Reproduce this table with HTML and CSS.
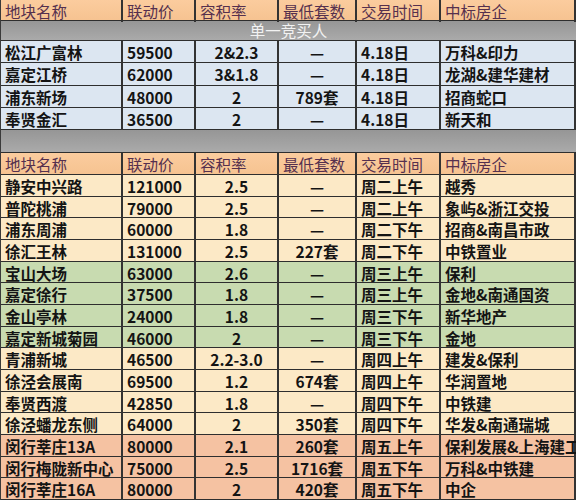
FILE: index.html
```html
<!DOCTYPE html>
<html lang="zh-CN">
<head>
<meta charset="utf-8">
<title>土拍</title>
<link rel="stylesheet" href="styles.css">
</head>
<body>
<div class="sheet">
  <div class="row head h1">
    <div class="c">地块名称</div><div class="c">联动价</div><div class="c">容积率</div><div class="c">最低套数</div><div class="c">交易时间</div><div class="c">中标房企</div>
  </div>
  <div class="band b1">单一竞买人</div>
  <div class="row blue r1">
    <div class="c">松江广富林</div><div class="c">59500</div><div class="c mid">2&amp;2.3</div><div class="c mid">—</div><div class="c">4.18日</div><div class="c">万科&amp;印力</div>
  </div>
  <div class="row blue r1">
    <div class="c">嘉定江桥</div><div class="c">62000</div><div class="c mid">3&amp;1.8</div><div class="c mid">—</div><div class="c">4.18日</div><div class="c">龙湖&amp;建华建材</div>
  </div>
  <div class="row blue r1">
    <div class="c">浦东新场</div><div class="c">48000</div><div class="c mid">2</div><div class="c mid">789套</div><div class="c">4.18日</div><div class="c">招商蛇口</div>
  </div>
  <div class="row blue r1">
    <div class="c">奉贤金汇</div><div class="c">36500</div><div class="c mid">2</div><div class="c mid">—</div><div class="c">4.18日</div><div class="c">新天和</div>
  </div>
  <div class="band b2"></div>
  <div class="row head h2">
    <div class="c">地块名称</div><div class="c">联动价</div><div class="c">容积率</div><div class="c">最低套数</div><div class="c">交易时间</div><div class="c">中标房企</div>
  </div>
  <div class="row cream">
    <div class="c">静安中兴路</div><div class="c">121000</div><div class="c mid">2.5</div><div class="c mid">—</div><div class="c">周二上午</div><div class="c">越秀</div>
  </div>
  <div class="row cream">
    <div class="c">普陀桃浦</div><div class="c">79000</div><div class="c mid">2.5</div><div class="c mid">—</div><div class="c">周二上午</div><div class="c">象屿&amp;浙江交投</div>
  </div>
  <div class="row cream">
    <div class="c">浦东周浦</div><div class="c">60000</div><div class="c mid">1.8</div><div class="c mid">—</div><div class="c">周二下午</div><div class="c">招商&amp;南昌市政</div>
  </div>
  <div class="row cream">
    <div class="c">徐汇王林</div><div class="c">131000</div><div class="c mid">2.5</div><div class="c mid">227套</div><div class="c">周二下午</div><div class="c">中铁置业</div>
  </div>
  <div class="row green">
    <div class="c">宝山大场</div><div class="c">63000</div><div class="c mid">2.6</div><div class="c mid">—</div><div class="c">周三上午</div><div class="c">保利</div>
  </div>
  <div class="row green">
    <div class="c">嘉定徐行</div><div class="c">37500</div><div class="c mid">1.8</div><div class="c mid">—</div><div class="c">周三上午</div><div class="c">金地&amp;南通国资</div>
  </div>
  <div class="row green">
    <div class="c">金山亭林</div><div class="c">24000</div><div class="c mid">1.8</div><div class="c mid">—</div><div class="c">周三下午</div><div class="c">新华地产</div>
  </div>
  <div class="row green">
    <div class="c">嘉定新城菊园</div><div class="c">46000</div><div class="c mid">2</div><div class="c mid">—</div><div class="c">周三下午</div><div class="c">金地</div>
  </div>
  <div class="row cream">
    <div class="c">青浦新城</div><div class="c">46500</div><div class="c mid">2.2-3.0</div><div class="c mid">—</div><div class="c">周四上午</div><div class="c">建发&amp;保利</div>
  </div>
  <div class="row cream">
    <div class="c">徐泾会展南</div><div class="c">69500</div><div class="c mid">1.2</div><div class="c mid">674套</div><div class="c">周四上午</div><div class="c">华润置地</div>
  </div>
  <div class="row cream">
    <div class="c">奉贤西渡</div><div class="c">42850</div><div class="c mid">1.8</div><div class="c mid">—</div><div class="c">周四下午</div><div class="c">中铁建</div>
  </div>
  <div class="row cream">
    <div class="c">徐泾蟠龙东侧</div><div class="c">64000</div><div class="c mid">2</div><div class="c mid">350套</div><div class="c">周四下午</div><div class="c">华发&amp;南通瑞城</div>
  </div>
  <div class="row salmon">
    <div class="c">闵行莘庄13A</div><div class="c">80000</div><div class="c mid">2.1</div><div class="c mid">260套</div><div class="c">周五上午</div><div class="c">保利发展&amp;上海建工</div>
  </div>
  <div class="row salmon">
    <div class="c">闵行梅陇新中心</div><div class="c">75000</div><div class="c mid">2.5</div><div class="c mid">1716套</div><div class="c">周五下午</div><div class="c">万科&amp;中铁建</div>
  </div>
  <div class="row salmon">
    <div class="c">闵行莘庄16A</div><div class="c">80000</div><div class="c mid">2</div><div class="c mid">420套</div><div class="c">周五下午</div><div class="c">中企</div>
  </div>
</div>
</body>
</html>
```
FILE: styles.css
```css
html, body {
  margin: 0;
  padding: 0;
  background: #ffffff;
  overflow: hidden;
}
body {
  width: 576px;
  height: 500px;
}
.sheet {
  width: 576px;
  box-sizing: border-box;
  overflow: hidden;
  font-family: "Noto Sans CJK SC", "Noto Sans", sans-serif;
  font-size: 15.5px;
  color: #141414;
  border-left: 1px solid #3a3a3a;
}
.row {
  display: grid;
  grid-template-columns: 122px 73px 83px 78px 84px 1fr;
  height: 21.67px;
  box-sizing: border-box;
  border-bottom: 1.5px solid #2e2e2e;
}
.c {
  box-sizing: border-box;
  border-right: 2px solid #333333;
  padding-left: 4px;
  display: flex;
  align-items: center;
  white-space: nowrap;
  font-weight: 700;
  min-width: 0;
}
.c.mid {
  justify-content: center;
  padding-left: 0;
}
.head .c {
  color: #55304e;
  font-weight: 400;
}
.head .c.mid { justify-content: flex-start; padding-left: 4px; }
.head {
  background: linear-gradient(#fbcc9e, #f6c391);
}
.h1 { height: 21px; }
.h2 { height: 22px; }
.r1 { height: 22.25px; }
.blue { background: #dce6f1; }
.cream { background: #fce9c6; }
.green { background: #c8dbb0; }
.salmon { background: #f5c2a2; }
.band {
  box-sizing: border-box;
  background: linear-gradient(#969696, #aaaaaa);
  border-bottom: 1.5px solid #2e2e2e;
  color: #f2f2f2;
  text-align: center;
  font-size: 15.5px;
}
.b1 {
  height: 20px;
  line-height: 19px;
}
.b2 {
  height: 23px;
}
```
